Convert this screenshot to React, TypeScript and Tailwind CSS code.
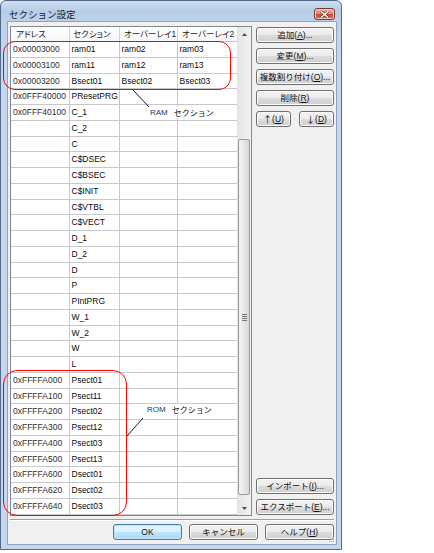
import type { ReactNode } from "react";

type Row = [string, string, string, string];

const rows: Row[] = [
  ["0x00003000", "ram01", "ram02", "ram03"],
  ["0x00003100", "ram11", "ram12", "ram13"],
  ["0x00003200", "Bsect01", "Bsect02", "Bsect03"],
  ["0x0FFF40000", "PResetPRG", "", ""],
  ["0x0FFF40100", "C_1", "", ""],
  ["", "C_2", "", ""],
  ["", "C", "", ""],
  ["", "C$DSEC", "", ""],
  ["", "C$BSEC", "", ""],
  ["", "C$INIT", "", ""],
  ["", "C$VTBL", "", ""],
  ["", "C$VECT", "", ""],
  ["", "D_1", "", ""],
  ["", "D_2", "", ""],
  ["", "D", "", ""],
  ["", "P", "", ""],
  ["", "PIntPRG", "", ""],
  ["", "W_1", "", ""],
  ["", "W_2", "", ""],
  ["", "W", "", ""],
  ["", "L", "", ""],
  ["0xFFFFA000", "Psect01", "", ""],
  ["0xFFFFA100", "Psect11", "", ""],
  ["0xFFFFA200", "Psect02", "", ""],
  ["0xFFFFA300", "Psect12", "", ""],
  ["0xFFFFA400", "Psect03", "", ""],
  ["0xFFFFA500", "Psect13", "", ""],
  ["0xFFFFA600", "Dsect01", "", ""],
  ["0xFFFFA620", "Dsect02", "", ""],
  ["0xFFFFA640", "Dsect03", "", ""],
];

const headers = ["アドレス", "セクション", "オーバーレイ1", "オーバーレイ2"];
const colW = ["w-[59px]", "w-[50px]", "w-[58px]", "w-[59px]"];
const headPad = ["pl-[5px]", "pl-[3px]", "pl-[4px]", "pl-[4px]"];

function K({ children }: { children: ReactNode }) {
  return <span className="underline underline-offset-[1px]">{children}</span>;
}

function Btn({
  children,
  className = "",
  primary = false,
}: {
  children: ReactNode;
  className?: string;
  primary?: boolean;
}) {
  return (
    <div
      className={`flex h-[16px] shrink-0 items-center justify-center rounded-[3px] border text-[8.5px] leading-none text-[#111111] ${
        primary
          ? "border-[#3c7fb1] bg-[linear-gradient(#eaf6fd_0%,#d9f0fc_50%,#bee6fd_50%,#a7d9f5_100%)] shadow-[inset_0_0_0_1px_#c4e5f6]"
          : "border-[#707070] bg-[linear-gradient(#f2f2f2_0%,#ebebeb_50%,#dddddd_50%,#cfcfcf_100%)] shadow-[inset_0_0_0_1px_#fbfbfb]"
      } ${className}`}
    >
      {children}
    </div>
  );
}

function Arrow({ up }: { up?: boolean }) {
  return (
    <div className="flex h-[14px] items-center justify-center">
      <svg width="5" height="3" viewBox="0 0 5 3">
        <path d={up ? "M0 3 L2.5 0 L5 3 Z" : "M0 0 L2.5 3 L5 0 Z"} fill="#4d4d4d" />
      </svg>
    </div>
  );
}

export default function App() {
  return (
    <div className="relative h-[553px] w-[434px] overflow-hidden bg-white font-['Liberation_Sans','Noto_Sans_CJK_JP',sans-serif]">
      {/* window */}
      <div className="flex h-[550px] w-[342px] flex-col rounded-t-[6px] border border-[#52698a] bg-[linear-gradient(180deg,#d2e0f1_0px,#b6cce7_10px,#bcd1ea_20px,#c4d7ee_60px,#c4d7ee_100%)]">
        <div className="flex h-[20px] shrink-0 items-start justify-between pl-[8px] pr-[6px] pt-[6px]">
          <span className="mt-[1px] font-['Noto_Sans_CJK_JP',sans-serif] text-[9.5px] leading-[12px] text-[#1b1b1b]">
            セクション設定
          </span>
          <div className="mt-[1px] flex h-[12px] w-[21px] items-center justify-center rounded-[3px] border border-[#7b3a33] bg-[linear-gradient(#efb6a9_0%,#dc8a78_45%,#c74f3c_55%,#d06a55_100%)] shadow-[inset_0_0_0_1px_#f3c6bc]">
            <svg width="9" height="7" viewBox="0 0 9 7">
              <path d="M1 0.5 L8 6.5 M8 0.5 L1 6.5" stroke="#5a2a24" strokeWidth="2.6" />
              <path d="M1 0.5 L8 6.5 M8 0.5 L1 6.5" stroke="#ffffff" strokeWidth="1.5" />
            </svg>
          </div>
        </div>

        {/* client area */}
        <div className="mb-[4px] ml-[6px] mr-[4px] flex flex-1 flex-col border border-[#8fa3bd] bg-[#f0f0f0] px-[2px] pb-[4px] pt-[4px]">
          <div className="flex h-[490px] gap-[4px]">
            {/* list view */}
            <div className="flex h-[490px] w-[242px] border border-[#828790] bg-white">
              <div className="flex w-[226px] flex-col overflow-hidden">
                <div className="flex h-[15px] shrink-0 border-b border-[#c8c8c8] bg-[linear-gradient(#ffffff,#f6f7f9)]">
                  {headers.map((h, i) => (
                    <div
                      key={h}
                      className={`flex items-center ${colW[i]} ${headPad[i]} ${
                        i < 3 ? "border-r border-[#d5d5d5]" : ""
                      } text-[8.5px] leading-none text-[#1e1e1e] [font-feature-settings:'palt']`}
                    >
                      {h}
                    </div>
                  ))}
                </div>
                {rows.map((r, ri) => (
                  <div key={ri} className="flex h-[15.75px] shrink-0 border-b border-[#c8c8c8]">
                    {r.map((c, ci) => (
                      <div
                        key={ci}
                        className={`flex items-center ${colW[ci]} ${
                          ci < 3 ? "border-r border-[#c8c8c8]" : ""
                        } ${ci === 0 ? "pl-[2px] text-[#2e2e2e]" : "pl-[1.5px] text-[#0a0a0a]"} text-[8.5px] leading-none`}
                      >
                        {c}
                      </div>
                    ))}
                  </div>
                ))}
              </div>
              {/* scrollbar */}
              <div className="flex w-[14px] flex-col bg-[linear-gradient(90deg,#e4e4e4,#f2f2f2)]">
                <Arrow up />
                <div className="flex-1 px-[1px]">
                  <div className="mt-[98px] flex h-[356px] items-center justify-center rounded-[2px] border border-[#9a9a9a] bg-[linear-gradient(90deg,#f5f5f5,#e6e6e6_50%,#d8d8d8)]">
                    <div className="flex flex-col gap-[1px]">
                      <div className="h-px w-[5px] bg-[#777]" />
                      <div className="h-px w-[5px] bg-[#777]" />
                      <div className="h-px w-[5px] bg-[#777]" />
                      <div className="h-px w-[5px] bg-[#777]" />
                    </div>
                  </div>
                </div>
                <Arrow />
              </div>
            </div>

            {/* side buttons */}
            <div className="flex w-[78px] flex-col pt-[1px]">
              <div className="flex flex-col gap-[5px]">
                <Btn>
                  追加(<K>A</K>)...
                </Btn>
                <Btn>
                  変更(<K>M</K>)...
                </Btn>
                <Btn>
                  複数割り付け(<K>O</K>)...
                </Btn>
                <Btn>
                  削除(<K>R</K>)
                </Btn>
                <div className="flex justify-between">
                  <Btn className="w-[35px]">
                    <span className="font-['Noto_Sans_CJK_JP',sans-serif] text-[9px]">↑</span>(<K>U</K>)
                  </Btn>
                  <Btn className="w-[35px]">
                    <span className="font-['Noto_Sans_CJK_JP',sans-serif] text-[9px]">↓</span>(<K>D</K>)
                  </Btn>
                </div>
              </div>
              <div className="mt-auto flex flex-col gap-[5px] pb-[1px]">
                <Btn>
                  インポート(<K>I</K>)...
                </Btn>
                <Btn>
                  エクスポート(<K>E</K>)...
                </Btn>
              </div>
            </div>
          </div>

          <div className="mt-[3px] h-px bg-[#a0a0a0]" />
          <div className="h-px bg-white" />

          <div className="mt-[3px] flex justify-end gap-[7px]">
            <Btn primary className="w-[69px]">
              OK
            </Btn>
            <Btn className="w-[69px]">キャンセル</Btn>
            <Btn className="w-[69px]">
              ヘルプ(<K>H</K>)
            </Btn>
          </div>
        </div>
      </div>

      {/* annotations */}
      <div className="pointer-events-none absolute left-[3px] top-[41px] h-[49px] w-[228px] rounded-[12px] border border-[#ff0000]" />
      <div className="pointer-events-none absolute left-[3px] top-[370px] h-[146px] w-[124px] rounded-[14px] border border-[#ff0000]" />
      <svg className="pointer-events-none absolute left-0 top-0" width="434" height="553">
        <line x1="133" y1="90" x2="149" y2="107" stroke="#000" strokeWidth="0.9" />
        <line x1="127" y1="436" x2="143" y2="418" stroke="#000" strokeWidth="0.9" />
      </svg>
      <div className="absolute left-[150px] top-[107px] flex h-[11px] items-center bg-white text-[8px] leading-none">
        <span className="text-[#1f3470]">RAM</span>
        <span className="ml-[6px] font-['Noto_Sans_CJK_JP',sans-serif] text-[#111]">セクション</span>
      </div>
      <div className="absolute left-[147px] top-[404px] flex h-[11px] items-center bg-white text-[8px] leading-none">
        <span className="text-[#1f3470]">ROM</span>
        <span className="ml-[6px] font-['Noto_Sans_CJK_JP',sans-serif] text-[#111]">セクション</span>
      </div>
      {/* size grip */}
      <svg className="absolute left-[329px] top-[537px]" width="6" height="6" viewBox="0 0 6 6">
        <rect x="4" y="0" width="1" height="1" fill="#b0b0b0" />
        <rect x="2" y="2" width="1" height="1" fill="#b0b0b0" />
        <rect x="4" y="2" width="1" height="1" fill="#b0b0b0" />
        <rect x="0" y="4" width="1" height="1" fill="#b0b0b0" />
        <rect x="2" y="4" width="1" height="1" fill="#b0b0b0" />
        <rect x="4" y="4" width="1" height="1" fill="#b0b0b0" />
      </svg>
    </div>
  );
}
